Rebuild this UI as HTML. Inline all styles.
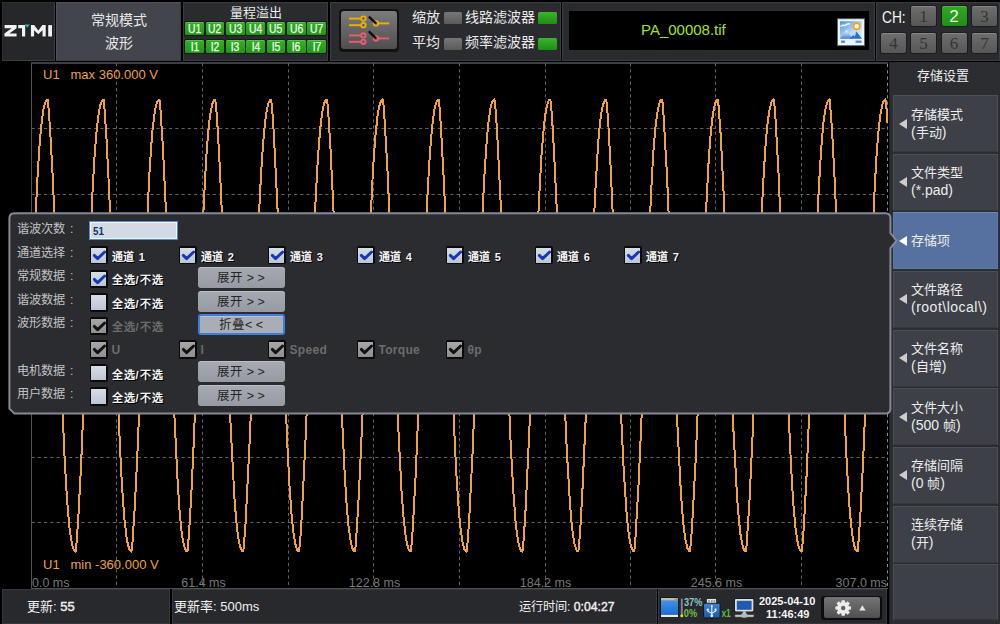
<!DOCTYPE html>
<html lang="zh-CN"><head><meta charset="utf-8"><style>
*{margin:0;padding:0;box-sizing:border-box}
html,body{width:1000px;height:624px;overflow:hidden;background:#000;font-family:'Liberation Sans',sans-serif;color:#e6e6e6}
.abs{position:absolute}
.box{position:absolute;background:#2a2b2f;border:1px solid #3b3c41}
.gb{position:absolute;width:18.8px;height:12.8px;background:linear-gradient(#33b024,#1f9816);border-radius:1.5px;color:#f4f8ee;font-size:12px;font-weight:400;line-height:14.5px;text-align:center;box-shadow:inset 0 1px 0 rgba(255,255,255,.2),0 0 0 1px #19191b}
.gb span{display:inline-block;transform:scaleX(0.86);-webkit-text-stroke:0.25px #f4f8ee}
.chb{position:absolute;width:25px;height:20px;background:linear-gradient(#6e6e6e,#575757);border-radius:2px;color:#353535;font-family:'Liberation Serif',serif;font-size:17px;line-height:22px;text-align:center;box-shadow:inset 0 1px 0 rgba(255,255,255,.18),0 0 0 1px #1c1c1e}
.chb.on{background:linear-gradient(#30a822,#218f18);color:#f0f0f0;font-family:'Liberation Sans',sans-serif;font-size:17px}
.rbtn{position:absolute;left:893px;width:105px;height:57px;background:#3d4047;border:1px solid #4b4e55;border-bottom-color:#35373c}
.rbtn.act{background:#5670a0;border:1px solid #5f79a8;border-top-color:#7088b4}
.rt{position:absolute;left:17px;font-size:13px;line-height:15px;color:#ececec;white-space:nowrap}
.rt i{font-style:normal;font-size:14px}
.tri{position:absolute;left:4.7px;top:22.6px;width:0;height:0;border-top:5.1px solid transparent;border-bottom:5.1px solid transparent;border-right:8.3px solid #cdcdcd}
.rbtn.act .tri{border-right-color:#fff}
.dl{position:absolute;left:16.5px;font-size:12.2px;line-height:18px;color:#c2c2c2;white-space:nowrap}
.cb{position:absolute;width:18.4px;height:18.4px;background:#0a0a0c;border-radius:2px;padding:0}
.cb::before{content:"";position:absolute;left:1.9px;top:1.9px;width:14.6px;height:14.6px;background:linear-gradient(#d6dde7,#bcc6d3)}
.cb.dis::before{background:linear-gradient(#a8a8a8,#8e8e8e)}
.cb svg{z-index:1}
.ct{position:absolute;font-size:11px;font-weight:700;line-height:16px;color:#f4f4f4;white-space:nowrap;text-shadow:1px 1px 0 #000}
.ct.dis{color:#6c6c6c;text-shadow:none}
.eb{position:absolute;left:197.5px;width:87px;height:21px;border-radius:3px;background:linear-gradient(#a6aab2,#969aa3);color:#262626;font-size:12.5px;line-height:22px;text-align:center;white-space:nowrap;box-shadow:inset 0 1px 0 rgba(255,255,255,.25)}
.eb.fold{border:2px solid #3a7ee0;line-height:19px;background:#a9adb5}
.inp{position:absolute;left:89px;top:220.5px;width:89px;height:19px;border:1.5px solid #4f8ad6;background:#d2dae4;box-shadow:inset 0 0 0 1px #f4f8fc}
.inp span{position:absolute;left:2.6px;top:2px;font-size:11px;font-weight:700;color:#15336a;line-height:15px;transform:scaleX(0.88);transform-origin:0 0}
.sb{position:absolute;top:589px;height:35px;background:#28292d;border:1px solid #36373b}
.st{position:absolute;font-size:13px;line-height:16px;color:#f0f0f0;white-space:nowrap}
</style></head><body>
<!-- top bar -->
<div class="box" style="left:2px;top:2px;width:53px;height:59px;background:#26272b;border-color:#2e2f33 #3c3d40 #3c3d40 #2e2f33"></div>
<svg class="abs" style="left:0;top:0" width="60" height="60">
 <g fill="#f2f2f2" stroke="#111" stroke-width="0.5" paint-order="stroke">
  <path d="M4.6 25.1 H16.6 V28.2 L9.4 33.4 H16.6 V36.5 H4.4 V33.4 L11.6 28.2 H4.6 Z"/>
  <path d="M18.2 25.1 H25.2 V36.5 H22 V28.2 H18.2 Z"/>
  <path d="M30.9 36.5 V25.1 H34.2 L38.3 30.6 L42.4 25.1 H45.7 V36.5 H42.5 V30.2 L38.3 34.2 L34.1 30.2 V36.5 Z"/>
  <path d="M48.2 25.1 H52 V36.5 H48.2 Z"/>
 </g>
 <path d="M24.7 24.6 H29.8 L27.25 27.4 Z" fill="#22c4c0"/>
</svg>
<div class="box" style="left:56px;top:2px;width:125px;height:59px;background:#42454c;border-color:#4e5157 #3a3c42 #3a3c42 #4e5157"></div>
<div class="abs" style="left:56px;top:11.5px;width:125px;text-align:center;font-size:14px;line-height:17px;color:#e8e8e8">常规模式</div>
<div class="abs" style="left:56px;top:34.5px;width:125px;text-align:center;font-size:14px;line-height:17px;color:#e8e8e8">波形</div>

<div class="box" style="left:183px;top:2px;width:145px;height:59px"></div>
<div class="abs" style="left:183px;top:4px;width:145px;text-align:center;font-size:13px;line-height:17px;color:#ececec;padding-left:1px">量程溢出</div>
<div class="gb" style="left:185.2px;top:22.4px"><span>U1</span></div>
<div class="gb" style="left:205.5px;top:22.4px"><span>U2</span></div>
<div class="gb" style="left:225.9px;top:22.4px"><span>U3</span></div>
<div class="gb" style="left:246.2px;top:22.4px"><span>U4</span></div>
<div class="gb" style="left:266.5px;top:22.4px"><span>U5</span></div>
<div class="gb" style="left:286.8px;top:22.4px"><span>U6</span></div>
<div class="gb" style="left:307.2px;top:22.4px"><span>U7</span></div>
<div class="gb" style="left:185.2px;top:39.8px"><span>I1</span></div>
<div class="gb" style="left:205.5px;top:39.8px"><span>I2</span></div>
<div class="gb" style="left:225.9px;top:39.8px"><span>I3</span></div>
<div class="gb" style="left:246.2px;top:39.8px"><span>I4</span></div>
<div class="gb" style="left:266.5px;top:39.8px"><span>I5</span></div>
<div class="gb" style="left:286.8px;top:39.8px"><span>I6</span></div>
<div class="gb" style="left:307.2px;top:39.8px"><span>I7</span></div>

<div class="box" style="left:330px;top:2px;width:231px;height:59px"></div>
<div class="abs" style="left:338.5px;top:9px;width:60.5px;height:42.5px;border-radius:4px;background:#121212"></div>
<div class="abs" style="left:340.6px;top:10.8px;width:56.4px;height:38.4px;border-radius:3px;background:linear-gradient(#7c7c7c,#4e4e4e)"></div>
<svg class="abs" style="left:330px;top:0" width="70" height="60">
 <g stroke="#eeb000" stroke-width="1.9" fill="#4a5a78">
  <line x1="19" y1="18.6" x2="31" y2="18.6"/><line x1="19" y1="25.2" x2="31" y2="25.2"/>
  <circle cx="33.4" cy="18.6" r="2.2"/><circle cx="33.4" cy="25.2" r="2.2"/>
  <line x1="48" y1="23.4" x2="59.2" y2="23.4"/><circle cx="46" cy="23.4" r="2.2"/>
 </g>
 <g stroke="#ea5e6c" stroke-width="1.9" fill="#555a60">
  <line x1="19" y1="35.4" x2="31" y2="35.4"/><line x1="19" y1="41.8" x2="31" y2="41.8"/>
  <circle cx="33.4" cy="35.4" r="2.2"/><circle cx="33.4" cy="41.8" r="2.2"/>
  <line x1="48" y1="38.4" x2="59.2" y2="38.4"/><circle cx="46" cy="38.4" r="2.2"/>
 </g>
 <g stroke="#0a0a0a" stroke-width="2.2">
  <line x1="38.8" y1="16.6" x2="46" y2="23.4"/><line x1="38.8" y1="31.4" x2="46" y2="38.4"/>
 </g>
</svg>
<div class="abs" style="left:412px;top:9px;font-size:14px;line-height:17px;color:#eaeaea">缩放</div>
<div class="abs" style="left:412px;top:34px;font-size:14px;line-height:17px;color:#eaeaea">平均</div>
<div class="abs" style="left:443.7px;top:11.9px;width:18.6px;height:11.9px;border-radius:1.5px;background:linear-gradient(#777,#5a5a5a)"></div>
<div class="abs" style="left:443.7px;top:37.6px;width:18.6px;height:12px;border-radius:1.5px;background:linear-gradient(#777,#5a5a5a)"></div>
<div class="abs" style="left:465px;top:9px;font-size:14px;line-height:17px;color:#eaeaea;white-space:nowrap">线路滤波器</div>
<div class="abs" style="left:465px;top:34px;font-size:14px;line-height:17px;color:#eaeaea;white-space:nowrap">频率滤波器</div>
<div class="abs" style="left:538.2px;top:11.9px;width:18.8px;height:12px;border-radius:1.5px;background:linear-gradient(#39b52a,#1f8c17)"></div>
<div class="abs" style="left:538.2px;top:37.6px;width:18.8px;height:12px;border-radius:1.5px;background:linear-gradient(#39b52a,#1f8c17)"></div>

<div class="box" style="left:562px;top:2px;width:313px;height:59px"></div>
<div class="abs" style="left:569px;top:11px;width:300px;height:38.6px;background:#000"></div>
<div class="abs" style="left:641px;top:21px;font-size:15px;line-height:17px;color:#a6e21c;white-space:nowrap">PA_00008.tif</div>
<svg class="abs" style="left:832px;top:14px" width="38" height="36">
 <defs>
  <linearGradient id="gsky" x1="0" y1="0" x2="1" y2="1"><stop offset="0" stop-color="#4a92e4"/><stop offset="0.6" stop-color="#bfdcf6"/><stop offset="1" stop-color="#e6f2fc"/></linearGradient>
  <linearGradient id="gm" x1="0" y1="0" x2="0" y2="1"><stop offset="0" stop-color="#ffffff"/><stop offset="1" stop-color="#3d7fd8"/></linearGradient>
 </defs>
 <rect x="5" y="4.2" width="28" height="27.9" fill="#bfe2ff" opacity="0.45"/>
 <rect x="6" y="5.2" width="26" height="25.9" fill="#eaf5ff"/>
 <rect x="8" y="7.2" width="22" height="17.6" fill="url(#gsky)"/>
 <path d="M8.5 12.5 Q11 10.5 13 11.6 Q15 9.4 18 9.8" stroke="#fff" stroke-width="1.4" fill="none" opacity="0.9"/>
 <path d="M8 24.8 L14.4 15.8 L21 24.8 Z" fill="url(#gm)"/>
 <path d="M17.5 24.8 L24.5 17.6 L30 24.8 Z" fill="#2d6fd0"/>
 <path d="M21 21 L24.5 17.6 L22.8 22.6 Z" fill="#e8f2ff" opacity="0.8"/>
 <circle cx="24.7" cy="12.3" r="3.1" fill="#fff6e8" stroke="#f4a428" stroke-width="1.8"/>
 <rect x="9" y="26.6" width="4" height="2.2" fill="#5a86c0"/>
 <rect x="23.5" y="26.6" width="6" height="2.2" fill="#5a86c0"/>
</svg>

<div class="box" style="left:876px;top:2px;width:124px;height:59px"></div>
<div class="abs" style="left:882px;top:9px;font-size:16px;line-height:17px;color:#f4f4f4;transform:scaleX(0.86);transform-origin:0 0">CH:</div>
<div class="chb" style="left:911px;top:6px">1</div>
<div class="chb on" style="left:941.5px;top:6px">2</div>
<div class="chb" style="left:972px;top:6px">3</div>
<div class="chb" style="left:881px;top:33px">4</div>
<div class="chb" style="left:911px;top:33px">5</div>
<div class="chb" style="left:941.5px;top:33px">6</div>
<div class="chb" style="left:972px;top:33px">7</div>

<!-- scope -->
<div class="abs" style="left:31px;top:62px;width:857px;height:527px;background:#000;border:1px solid #4e4f52;border-top:2px solid #3e3f42;border-right:none"></div>
<svg class="abs" style="left:0;top:0" width="1000" height="624">
 <g stroke="#626262" stroke-width="1" stroke-dasharray="3.2 3.05">
 <line x1="116.5" y1="63.0" x2="116.5" y2="588.0"/>
<line x1="202.5" y1="63.0" x2="202.5" y2="588.0"/>
<line x1="288.5" y1="63.0" x2="288.5" y2="588.0"/>
<line x1="373.5" y1="63.0" x2="373.5" y2="588.0"/>
<line x1="459.5" y1="63.0" x2="459.5" y2="588.0"/>
<line x1="545.5" y1="63.0" x2="545.5" y2="588.0"/>
<line x1="630.5" y1="63.0" x2="630.5" y2="588.0"/>
<line x1="715.5" y1="63.0" x2="715.5" y2="588.0"/>
<line x1="801.5" y1="63.0" x2="801.5" y2="588.0"/>
<line x1="887.5" y1="64" x2="887.5" y2="588" stroke="#8a8a8a"/>
<line x1="31.5" y1="128.5" x2="887.5" y2="128.5"/>
<line x1="31.5" y1="194.5" x2="887.5" y2="194.5"/>
<line x1="31.5" y1="259.5" x2="887.5" y2="259.5"/>
<line x1="31.5" y1="325.5" x2="887.5" y2="325.5"/>
<line x1="31.5" y1="391.5" x2="887.5" y2="391.5"/>
<line x1="31.5" y1="457.5" x2="887.5" y2="457.5"/>
<line x1="31.5" y1="522.5" x2="887.5" y2="522.5"/>
 </g>
 <path d="M31.5 311.9L36.1 204.6L37.9 169.7L39.7 142.9L41.6 122.8L43.5 109.2L44.6 104.5L45.8 101.3L47.2 99.6L47.7 99.5L47.9 100.4L50.0 127.8L52.9 180.4L60.0 352.3L64.4 453.6L66.2 486.8L68.0 512.0L69.8 531.1L71.9 543.7L73.1 548.2L74.4 550.8L75.6 551.5L76.1 549.0L78.3 517.5L81.1 464.6L88.4 285.7L92.6 190.3L94.4 158.8L96.2 135.2L98.1 117.1L100.2 105.4L101.7 101.3L102.4 100.1L103.2 99.5L103.5 99.5L103.7 100.1L104.2 104.3L106.5 138.8L109.2 191.9L116.9 378.3L121.0 468.2L122.8 497.9L124.5 519.9L126.6 537.4L127.7 543.5L128.8 547.7L130.1 550.6L130.8 551.3L131.4 551.5L132.4 543.6L134.8 506.7L137.4 454.2L145.3 260.0L149.3 175.5L151.1 147.6L152.8 126.8L155.1 110.2L156.3 104.8L157.5 101.3L158.6 99.8L159.3 99.5L159.5 99.8L160.6 111.2L163.0 149.1L165.5 201.7L173.8 403.5L177.7 483.2L179.5 509.7L181.2 528.6L182.4 537.5L183.7 544.2L185.0 548.8L186.4 551.2L187.3 551.5L187.6 550.2L188.9 535.2L191.2 496.9L193.6 445.8L202.2 235.2L206.1 159.8L207.9 135.5L209.7 118.0L211.0 109.9L212.3 104.2L213.7 100.6L214.5 99.8L215.2 99.5L215.9 104.4L217.2 121.0L219.4 159.2L221.7 208.8L230.7 427.7L234.5 498.7L236.3 521.5L238.2 537.2L239.4 543.6L240.6 547.9L241.8 550.7L242.5 551.3L243.2 551.4L244.0 544.4L245.5 524.0L249.8 438.6L259.1 211.7L261.1 173.2L263.0 144.6L264.9 123.7L266.8 109.8L267.9 105.1L269.0 101.8L270.2 99.8L271.0 99.5L271.2 99.8L272.2 109.1L273.8 133.6L277.8 214.4L287.6 450.5L289.6 487.3L291.5 514.0L293.5 532.9L295.6 545.0L296.5 548.3L297.5 550.4L298.8 551.5L299.2 550.7L300.4 538.0L302.1 510.1L305.7 436.1L313.0 256.9L316.1 189.7L318.1 155.3L320.1 130.1L322.1 112.9L323.3 107.0L324.4 102.9L325.3 100.8L326.4 99.6L326.9 99.6L327.3 101.3L328.6 117.8L330.5 148.9L333.7 214.6L341.2 399.8L344.6 471.6L346.6 504.6L348.7 527.6L350.9 542.7L352.1 547.5L353.4 550.5L354.1 551.3L354.9 551.4L355.5 547.2L357.0 525.9L358.9 493.6L362.3 419.9L369.7 237.2L373.0 169.6L375.2 138.1L377.4 117.1L378.6 109.7L379.8 104.3L381.1 100.9L382.5 99.5L382.9 99.8L383.2 101.8L384.2 113.6L387.3 166.5L390.4 235.8L397.7 415.9L401.5 490.7L403.6 518.0L405.7 536.8L406.9 543.2L408.1 547.9L409.4 550.6L410.1 551.3L410.7 551.5L411.4 546.2L412.7 529.5L415.7 474.8L425.8 231.3L428.0 185.1L430.0 151.6L432.0 128.1L434.0 111.9L435.1 106.2L436.3 102.4L437.5 100.1L438.2 99.6L438.7 99.7L439.5 106.8L440.9 126.7L444.1 186.3L454.0 425.1L456.3 473.2L458.6 507.5L460.4 527.4L462.3 541.0L463.3 545.7L464.4 549.2L465.7 551.2L466.5 551.5L466.7 551.1L467.6 542.1L469.2 519.1L472.5 454.1L482.1 220.5L484.7 170.6L487.1 135.9L488.8 119.1L490.6 107.8L491.6 103.8L492.7 101.0L494.0 99.6L494.4 99.5L494.7 100.2L495.8 111.6L497.4 137.5L500.9 208.0L510.4 437.3L513.1 488.5L515.6 521.9L517.2 535.6L519.0 545.2L520.0 548.6L521.1 550.7L522.3 551.5L522.7 550.2L523.9 536.2L525.7 507.5L529.3 431.5L538.7 206.3L541.5 155.4L544.2 122.9L545.8 111.5L547.5 103.8L548.5 101.1L549.6 99.7L550.3 99.6L550.7 101.6L552.1 118.5L553.9 149.3L557.8 231.3L564.0 387.6L566.9 452.0L569.9 502.8L571.3 520.2L572.8 533.6L574.3 542.9L576.0 548.9L577.1 550.8L578.2 551.5L578.8 548.3L580.3 528.5L582.2 495.5L586.2 407.5L592.2 258.6L595.3 191.2L598.3 141.3L599.8 124.9L601.4 112.6L603.0 104.9L604.7 100.5L605.6 99.7L606.2 99.6L606.9 104.5L608.5 127.4L610.4 162.0L614.6 255.9L620.3 398.1L623.6 468.1L626.8 516.0L628.4 531.5L630.1 542.5L631.9 548.9L632.8 550.7L633.8 551.5L634.1 551.4L634.4 550.4L635.1 543.7L638.7 481.6L643.1 382.4L648.6 245.6L652.0 174.9L653.6 148.8L655.3 129.1L657.0 114.7L658.8 105.2L660.4 100.9L661.2 99.8L662.0 99.6L662.6 102.9L663.4 112.6L667.1 177.8L671.5 281.4L676.8 413.5L680.4 483.8L682.0 508.5L683.7 527.3L685.6 540.4L687.5 548.4L689.0 551.1L689.9 551.5L690.1 551.0L691.9 529.1L695.6 461.5L700.0 356.5L705.1 229.6L708.7 159.9L710.5 136.0L712.3 118.8L714.2 107.1L715.2 103.3L716.2 100.8L717.0 99.8L717.8 99.5L718.2 101.3L720.7 134.9L724.1 202.5L728.4 307.6L733.4 429.2L737.1 497.5L738.9 520.0L740.7 536.2L742.8 546.5L743.9 549.6L745.0 551.2L745.7 551.5L745.9 551.2L746.6 545.4L749.6 498.7L752.7 433.3L756.8 330.2L761.7 213.4L763.6 176.0L765.4 147.5L767.2 126.3L769.2 111.5L771.3 102.5L772.5 100.2L773.7 99.5L774.4 104.0L775.5 118.8L778.4 170.7L785.3 334.0L790.0 444.3L791.8 480.1L793.6 507.1L795.4 527.1L797.4 541.0L798.5 546.0L799.6 549.4L800.9 551.3L801.6 551.5L801.8 551.0L802.6 543.5L803.9 525.7L806.7 473.2L813.7 303.9L818.2 200.2L820.1 165.9L821.8 140.4L823.6 121.3L825.6 108.2L826.8 103.6L828.0 100.7L828.8 99.8L829.5 99.5L829.9 101.3L832.1 131.3L834.9 183.8L842.2 360.2L846.5 458.0L848.3 490.5L850.1 514.5L852.0 532.9L854.0 544.8L855.4 549.1L856.8 551.3L857.6 551.3L858.1 547.7L860.4 514.1L863.1 461.1L870.6 277.8L874.8 186.1L876.5 155.9L878.3 132.8L880.3 115.1L882.5 104.1L883.9 100.7L884.6 99.8L885.4 99.5L886.3 106.1L887.5 123.2" fill="none" stroke="#f2a23a" stroke-width="2" stroke-linejoin="round" shape-rendering="crispEdges"/>
</svg>
<div class="abs" style="left:43px;top:67px;font-size:13px;line-height:16px;color:#eda23e;white-space:nowrap">U1</div><div class="abs" style="left:70.5px;top:67px;font-size:13px;line-height:16px;color:#eda23e;white-space:nowrap">max 360.000 V</div>
<div class="abs" style="left:43px;top:557px;font-size:13px;line-height:16px;color:#eda23e;white-space:nowrap">U1</div><div class="abs" style="left:70.5px;top:557px;font-size:13px;line-height:16px;color:#eda23e;white-space:nowrap">min -360.000 V</div>
<div class="abs" style="left:32px;top:575.5px;font-size:12.5px;line-height:15px;color:#777;white-space:nowrap">0.0 ms</div>
<div class="abs" style="left:163.5px;top:575.5px;width:80px;text-align:center;font-size:12.5px;line-height:15px;color:#777">61.4 ms</div>
<div class="abs" style="left:334.5px;top:575.5px;width:80px;text-align:center;font-size:12.5px;line-height:15px;color:#777">122.8 ms</div>
<div class="abs" style="left:505.5px;top:575.5px;width:80px;text-align:center;font-size:12.5px;line-height:15px;color:#777">184.2 ms</div>
<div class="abs" style="left:676.5px;top:575.5px;width:80px;text-align:center;font-size:12.5px;line-height:15px;color:#777">245.6 ms</div>
<div class="abs" style="left:787px;top:575.5px;width:100px;text-align:right;font-size:12.5px;line-height:15px;color:#777">307.0 ms</div>

<!-- right panel -->
<div class="abs" style="left:888.5px;top:62px;width:111.5px;height:562px;background:#2b2d31;border-left:1px solid #1e1f22"></div>
<div class="abs" style="left:887px;top:67px;width:111px;text-align:center;font-size:13px;line-height:17px;color:#ececec">存储设置</div>
<div class="rbtn" style="top:95.0px"><div class="tri"></div><div class="rt" style="top:10.5px">存储模式</div><div class="rt" style="top:28.5px"><i>(</i>手动<i>)</i></div></div>
<div class="rbtn" style="top:153.6px"><div class="tri"></div><div class="rt" style="top:10.5px">文件类型</div><div class="rt" style="top:28.5px"><i>(*.pad)</i></div></div>
<div class="rbtn act" style="top:212.3px"><div class="tri"></div><div class="rt" style="top:19.5px">存储项</div></div>
<div class="rbtn" style="top:270.9px"><div class="tri"></div><div class="rt" style="top:10.5px">文件路径</div><div class="rt" style="top:28.5px"><i style='letter-spacing:0.5px'>(root\local\)</i></div></div>
<div class="rbtn" style="top:329.6px"><div class="tri"></div><div class="rt" style="top:10.5px">文件名称</div><div class="rt" style="top:28.5px"><i>(</i>自增<i>)</i></div></div>
<div class="rbtn" style="top:388.2px"><div class="tri"></div><div class="rt" style="top:10.5px">文件大小</div><div class="rt" style="top:28.5px"><i>(500 </i>帧<i>)</i></div></div>
<div class="rbtn" style="top:446.8px"><div class="tri"></div><div class="rt" style="top:10.5px">存储间隔</div><div class="rt" style="top:28.5px"><i>(0 </i>帧<i>)</i></div></div>
<div class="rbtn" style="top:505.5px"><div class="rt" style="top:10.5px">连续存储</div><div class="rt" style="top:28.5px"><i>(</i>开<i>)</i></div></div>
<div class="rbtn" style="top:564.1px;height:56px"></div>

<!-- status bar -->
<div class="sb" style="left:2px;width:168px"></div>
<div class="st" style="left:27px;top:598.5px">更新: <b style="font-weight:400;-webkit-text-stroke:0.4px #f0f0f0">55</b></div>
<div class="sb" style="left:172px;width:485px"></div>
<div class="st" style="left:174px;top:598.5px">更新率: 500ms</div>
<div class="st" style="left:519px;top:598.5px;font-size:12.2px">运行时间: <b style="font-weight:400;-webkit-text-stroke:0.4px #f0f0f0">0:04:27</b></div>
<div class="sb" style="left:658px;width:229px"></div>
<svg class="abs" style="left:656px;top:594px" width="104" height="28">
 <defs>
  <linearGradient id="gwin" x1="0" y1="0" x2="0" y2="1"><stop offset="0" stop-color="#3d92ea"/><stop offset="1" stop-color="#1c6cd4"/></linearGradient>
  <linearGradient id="gusb" x1="0" y1="0" x2="0" y2="1"><stop offset="0" stop-color="#3a86d6"/><stop offset="1" stop-color="#1a5aa6"/></linearGradient>
 </defs>
 <rect x="4.2" y="3.4" width="18.2" height="20.4" fill="#0c0c0c"/>
 <rect x="5" y="4" width="17" height="2.8" fill="#bdbdbd"/>
 <rect x="18.5" y="4.4" width="1.5" height="1.8" fill="#5c5"/><rect x="20.2" y="4.4" width="1.5" height="1.8" fill="#e55"/>
 <rect x="5" y="6.8" width="17" height="14" fill="url(#gwin)"/>
 <rect x="5" y="20.8" width="17" height="2.3" fill="#ececec"/>
 <rect x="24.6" y="4.2" width="2.4" height="18.8" rx="1" fill="#8a8a8a" stroke="#1a1a1a" stroke-width="0.5"/>
 <circle cx="25.8" cy="21.8" r="1.5" fill="#d4e020"/>
 <text x="28" y="11.6" font-family="Liberation Sans" font-size="10.5" font-weight="700" fill="#8cc4c4" transform="translate(28 0) scale(0.88 1) translate(-28 0)">37%</text>
 <text x="27.8" y="23.3" font-family="Liberation Sans" font-size="10.5" font-weight="700" fill="#6cc048" transform="translate(27.8 0) scale(0.88 1) translate(-27.8 0)">0%</text>
 <rect x="50" y="4.4" width="11" height="5.4" fill="#111"/>
 <rect x="50.8" y="4.9" width="9.4" height="4.4" fill="#e4e4e4"/>
 <rect x="52.2" y="6.2" width="1.6" height="1.6" fill="#888"/><rect x="55" y="6.2" width="1.6" height="1.6" fill="#888"/><rect x="57.6" y="6.2" width="1.6" height="1.6" fill="#888"/>
 <rect x="47.5" y="9.2" width="16.6" height="14.8" rx="1.5" fill="url(#gusb)" stroke="#0c0c0c" stroke-width="0.8"/>
 <g stroke="#f0f0f0" stroke-width="1.1" fill="none">
  <path d="M55.8 11.5 V21.6"/><path d="M51.8 15.6 V17.2 L55.8 19.4 L59.6 17 V15.6"/>
 </g>
 <path d="M54.4 12.6 L55.8 10.8 L57.2 12.6 Z" fill="#f0f0f0"/>
 <circle cx="51.8" cy="15.6" r="1.2" fill="#f0f0f0"/><rect x="58.6" y="14.6" width="2" height="2" fill="#f0f0f0"/>
 <circle cx="55.8" cy="21.8" r="1.4" fill="#f0f0f0"/>
 <text x="65.4" y="23.2" font-family="Liberation Sans" font-size="10" font-weight="700" fill="#5cbc3c" transform="translate(65.4 0) scale(0.85 1) translate(-65.4 0)">x1</text>
 <rect x="78.4" y="4.4" width="19.6" height="13.6" fill="#111"/>
 <rect x="79" y="5" width="18.4" height="12.4" rx="0.8" fill="#e2ded2"/>
 <rect x="80.8" y="6.8" width="14.8" height="9" fill="#1c5cb4"/>
 <rect x="86.8" y="17.4" width="3" height="2.6" fill="#c8c8c8"/>
 <rect x="78.6" y="20.6" width="19.6" height="2.6" rx="1.2" fill="#cfcfcf" stroke="#111" stroke-width="0.5"/>
 <ellipse cx="88.3" cy="21.4" rx="3.2" ry="2.4" fill="#b8b8b8"/>
</svg>
<div class="abs" style="left:759px;top:596px;font-size:11px;font-weight:700;line-height:11px;color:#f4f4f4;white-space:nowrap">2025-04-10</div>
<div class="abs" style="left:766px;top:608.5px;font-size:11px;font-weight:700;line-height:11px;color:#f4f4f4;white-space:nowrap">11:46:49</div>
<div class="abs" style="left:821.4px;top:595.5px;width:60.2px;height:24.5px;border-radius:3px;background:#0c0c0c"></div>
<div class="abs" style="left:823.5px;top:597.3px;width:56px;height:20.6px;border-radius:2px;background:linear-gradient(#747474,#4f4f4f)"></div>
<svg class="abs" style="left:830px;top:597px" width="40" height="22">
 <g transform="translate(13.2 11)">
  <path fill="#ececec" fill-rule="evenodd" d="M-1.77 -5.73 L-1.59 -7.84 L1.59 -7.84 L1.77 -5.73 L2.80 -5.31 L4.42 -6.67 L6.67 -4.42 L5.31 -2.80 L5.73 -1.77 L7.84 -1.59 L7.84 1.59 L5.73 1.77 L5.31 2.80 L6.67 4.42 L4.42 6.67 L2.80 5.31 L1.77 5.73 L1.59 7.84 L-1.59 7.84 L-1.77 5.73 L-2.80 5.31 L-4.42 6.67 L-6.67 4.42 L-5.31 2.80 L-5.73 1.77 L-7.84 1.59 L-7.84 -1.59 L-5.73 -1.77 L-5.31 -2.80 L-6.67 -4.42 L-4.42 -6.67 L-2.80 -5.31 Z M2.2 0 A2.2 2.2 0 1 0 -2.2 0 A2.2 2.2 0 1 0 2.2 0 Z"/>
 </g>
 <polygon points="29.2,13.4 35.6,13.4 32.4,8.3" fill="#e4e4e4"/>
</svg>

<!-- dialog -->
<svg class="abs" style="left:0;top:0" width="1000" height="624">
 <path d="M14.4 213.3 H885.4 Q890.4 213.3 890.4 218.3 V233 L896.5 240.7 L890.4 248.3 V408.6 Q890.4 413.6 885.4 413.6 H14.4 L9.4 408.6 V218.3 Q9.4 213.3 14.4 213.3 Z" fill="#2a2c30" stroke="#858993" stroke-width="2"/>
</svg>
<div class="dl" style="top:220.3px">谐波次数</div><div class="dl" style="left:70px;top:220.3px">:</div>
<div class="dl" style="top:243.8px">通道选择</div><div class="dl" style="left:70px;top:243.8px">:</div>
<div class="dl" style="top:267.4px">常规数据</div><div class="dl" style="left:70px;top:267.4px">:</div>
<div class="dl" style="top:290.9px">谐波数据</div><div class="dl" style="left:70px;top:290.9px">:</div>
<div class="dl" style="top:314.4px">波形数据</div><div class="dl" style="left:70px;top:314.4px">:</div>
<div class="dl" style="top:361.5px">电机数据</div><div class="dl" style="left:70px;top:361.5px">:</div>
<div class="dl" style="top:385.0px">用户数据</div><div class="dl" style="left:70px;top:385.0px">:</div>
<div class="inp"><span>51</span></div>
<div class="cb" style="left:89.5px;top:246.1px"><svg width="18" height="18" style="position:absolute;left:0;top:0"><path d="M4.3 9.4 L7.6 12.6 L14.6 6" fill="none" stroke="#1438b8" stroke-width="2.9" stroke-linecap="round" stroke-linejoin="round"/></svg></div>
<div class="ct" style="left:111.5px;top:248.6px;letter-spacing:0.7px">通道&nbsp;1</div>
<div class="cb" style="left:178.5px;top:246.1px"><svg width="18" height="18" style="position:absolute;left:0;top:0"><path d="M4.3 9.4 L7.6 12.6 L14.6 6" fill="none" stroke="#1438b8" stroke-width="2.9" stroke-linecap="round" stroke-linejoin="round"/></svg></div>
<div class="ct" style="left:200.5px;top:248.6px;letter-spacing:0.7px">通道&nbsp;2</div>
<div class="cb" style="left:267.5px;top:246.1px"><svg width="18" height="18" style="position:absolute;left:0;top:0"><path d="M4.3 9.4 L7.6 12.6 L14.6 6" fill="none" stroke="#1438b8" stroke-width="2.9" stroke-linecap="round" stroke-linejoin="round"/></svg></div>
<div class="ct" style="left:289.5px;top:248.6px;letter-spacing:0.7px">通道&nbsp;3</div>
<div class="cb" style="left:356.5px;top:246.1px"><svg width="18" height="18" style="position:absolute;left:0;top:0"><path d="M4.3 9.4 L7.6 12.6 L14.6 6" fill="none" stroke="#1438b8" stroke-width="2.9" stroke-linecap="round" stroke-linejoin="round"/></svg></div>
<div class="ct" style="left:378.5px;top:248.6px;letter-spacing:0.7px">通道&nbsp;4</div>
<div class="cb" style="left:445.5px;top:246.1px"><svg width="18" height="18" style="position:absolute;left:0;top:0"><path d="M4.3 9.4 L7.6 12.6 L14.6 6" fill="none" stroke="#1438b8" stroke-width="2.9" stroke-linecap="round" stroke-linejoin="round"/></svg></div>
<div class="ct" style="left:467.5px;top:248.6px;letter-spacing:0.7px">通道&nbsp;5</div>
<div class="cb" style="left:534.5px;top:246.1px"><svg width="18" height="18" style="position:absolute;left:0;top:0"><path d="M4.3 9.4 L7.6 12.6 L14.6 6" fill="none" stroke="#1438b8" stroke-width="2.9" stroke-linecap="round" stroke-linejoin="round"/></svg></div>
<div class="ct" style="left:556.5px;top:248.6px;letter-spacing:0.7px">通道&nbsp;6</div>
<div class="cb" style="left:623.5px;top:246.1px"><svg width="18" height="18" style="position:absolute;left:0;top:0"><path d="M4.3 9.4 L7.6 12.6 L14.6 6" fill="none" stroke="#1438b8" stroke-width="2.9" stroke-linecap="round" stroke-linejoin="round"/></svg></div>
<div class="ct" style="left:645.5px;top:248.6px;letter-spacing:0.7px">通道&nbsp;7</div>
<div class="cb" style="left:89.5px;top:269.7px"><svg width="18" height="18" style="position:absolute;left:0;top:0"><path d="M4.3 9.4 L7.6 12.6 L14.6 6" fill="none" stroke="#1438b8" stroke-width="2.9" stroke-linecap="round" stroke-linejoin="round"/></svg></div>
<div class="ct" style="left:111.5px;top:272.4px;letter-spacing:1px">全选/不选</div>
<div class="eb" style="top:267.2px">展开 > ></div>
<div class="cb" style="left:89.5px;top:293.2px"></div>
<div class="ct" style="left:111.5px;top:295.9px;letter-spacing:1px">全选/不选</div>
<div class="eb" style="top:290.7px">展开 > ></div>
<div class="cb dis" style="left:89.5px;top:316.7px"><svg width="18" height="18" style="position:absolute;left:0;top:0"><path d="M4.3 9.4 L7.6 12.6 L14.6 6" fill="none" stroke="#111" stroke-width="2.9" stroke-linecap="round" stroke-linejoin="round"/></svg></div>
<div class="ct dis" style="left:111.5px;top:319.4px;letter-spacing:1px">全选/不选</div>
<div class="eb fold" style="top:314.2px">折叠< <</div>
<div class="cb" style="left:89.5px;top:363.8px"></div>
<div class="ct" style="left:111.5px;top:366.5px;letter-spacing:1px">全选/不选</div>
<div class="eb" style="top:361.3px">展开 > ></div>
<div class="cb" style="left:89.5px;top:387.3px"></div>
<div class="ct" style="left:111.5px;top:390.0px;letter-spacing:1px">全选/不选</div>
<div class="eb" style="top:384.8px">展开 > ></div>
<div class="cb dis" style="left:89.5px;top:340.2px"><svg width="18" height="18" style="position:absolute;left:0;top:0"><path d="M4.3 9.4 L7.6 12.6 L14.6 6" fill="none" stroke="#111" stroke-width="2.9" stroke-linecap="round" stroke-linejoin="round"/></svg></div>
<div class="ct dis" style="left:111.5px;top:341.8px;font-size:12px;letter-spacing:0.3px">U</div>
<div class="cb dis" style="left:178.5px;top:340.2px"><svg width="18" height="18" style="position:absolute;left:0;top:0"><path d="M4.3 9.4 L7.6 12.6 L14.6 6" fill="none" stroke="#111" stroke-width="2.9" stroke-linecap="round" stroke-linejoin="round"/></svg></div>
<div class="ct dis" style="left:200.5px;top:341.8px;font-size:12px;letter-spacing:0.3px">I</div>
<div class="cb dis" style="left:267.5px;top:340.2px"><svg width="18" height="18" style="position:absolute;left:0;top:0"><path d="M4.3 9.4 L7.6 12.6 L14.6 6" fill="none" stroke="#111" stroke-width="2.9" stroke-linecap="round" stroke-linejoin="round"/></svg></div>
<div class="ct dis" style="left:289.5px;top:341.8px;font-size:12px;letter-spacing:0.3px">Speed</div>
<div class="cb dis" style="left:356.5px;top:340.2px"><svg width="18" height="18" style="position:absolute;left:0;top:0"><path d="M4.3 9.4 L7.6 12.6 L14.6 6" fill="none" stroke="#111" stroke-width="2.9" stroke-linecap="round" stroke-linejoin="round"/></svg></div>
<div class="ct dis" style="left:378.5px;top:341.8px;font-size:12px;letter-spacing:0.3px">Torque</div>
<div class="cb dis" style="left:445.5px;top:340.2px"><svg width="18" height="18" style="position:absolute;left:0;top:0"><path d="M4.3 9.4 L7.6 12.6 L14.6 6" fill="none" stroke="#111" stroke-width="2.9" stroke-linecap="round" stroke-linejoin="round"/></svg></div>
<div class="ct dis" style="left:467.5px;top:341.8px;font-size:12px;letter-spacing:0.3px">θp</div>
</body></html>
